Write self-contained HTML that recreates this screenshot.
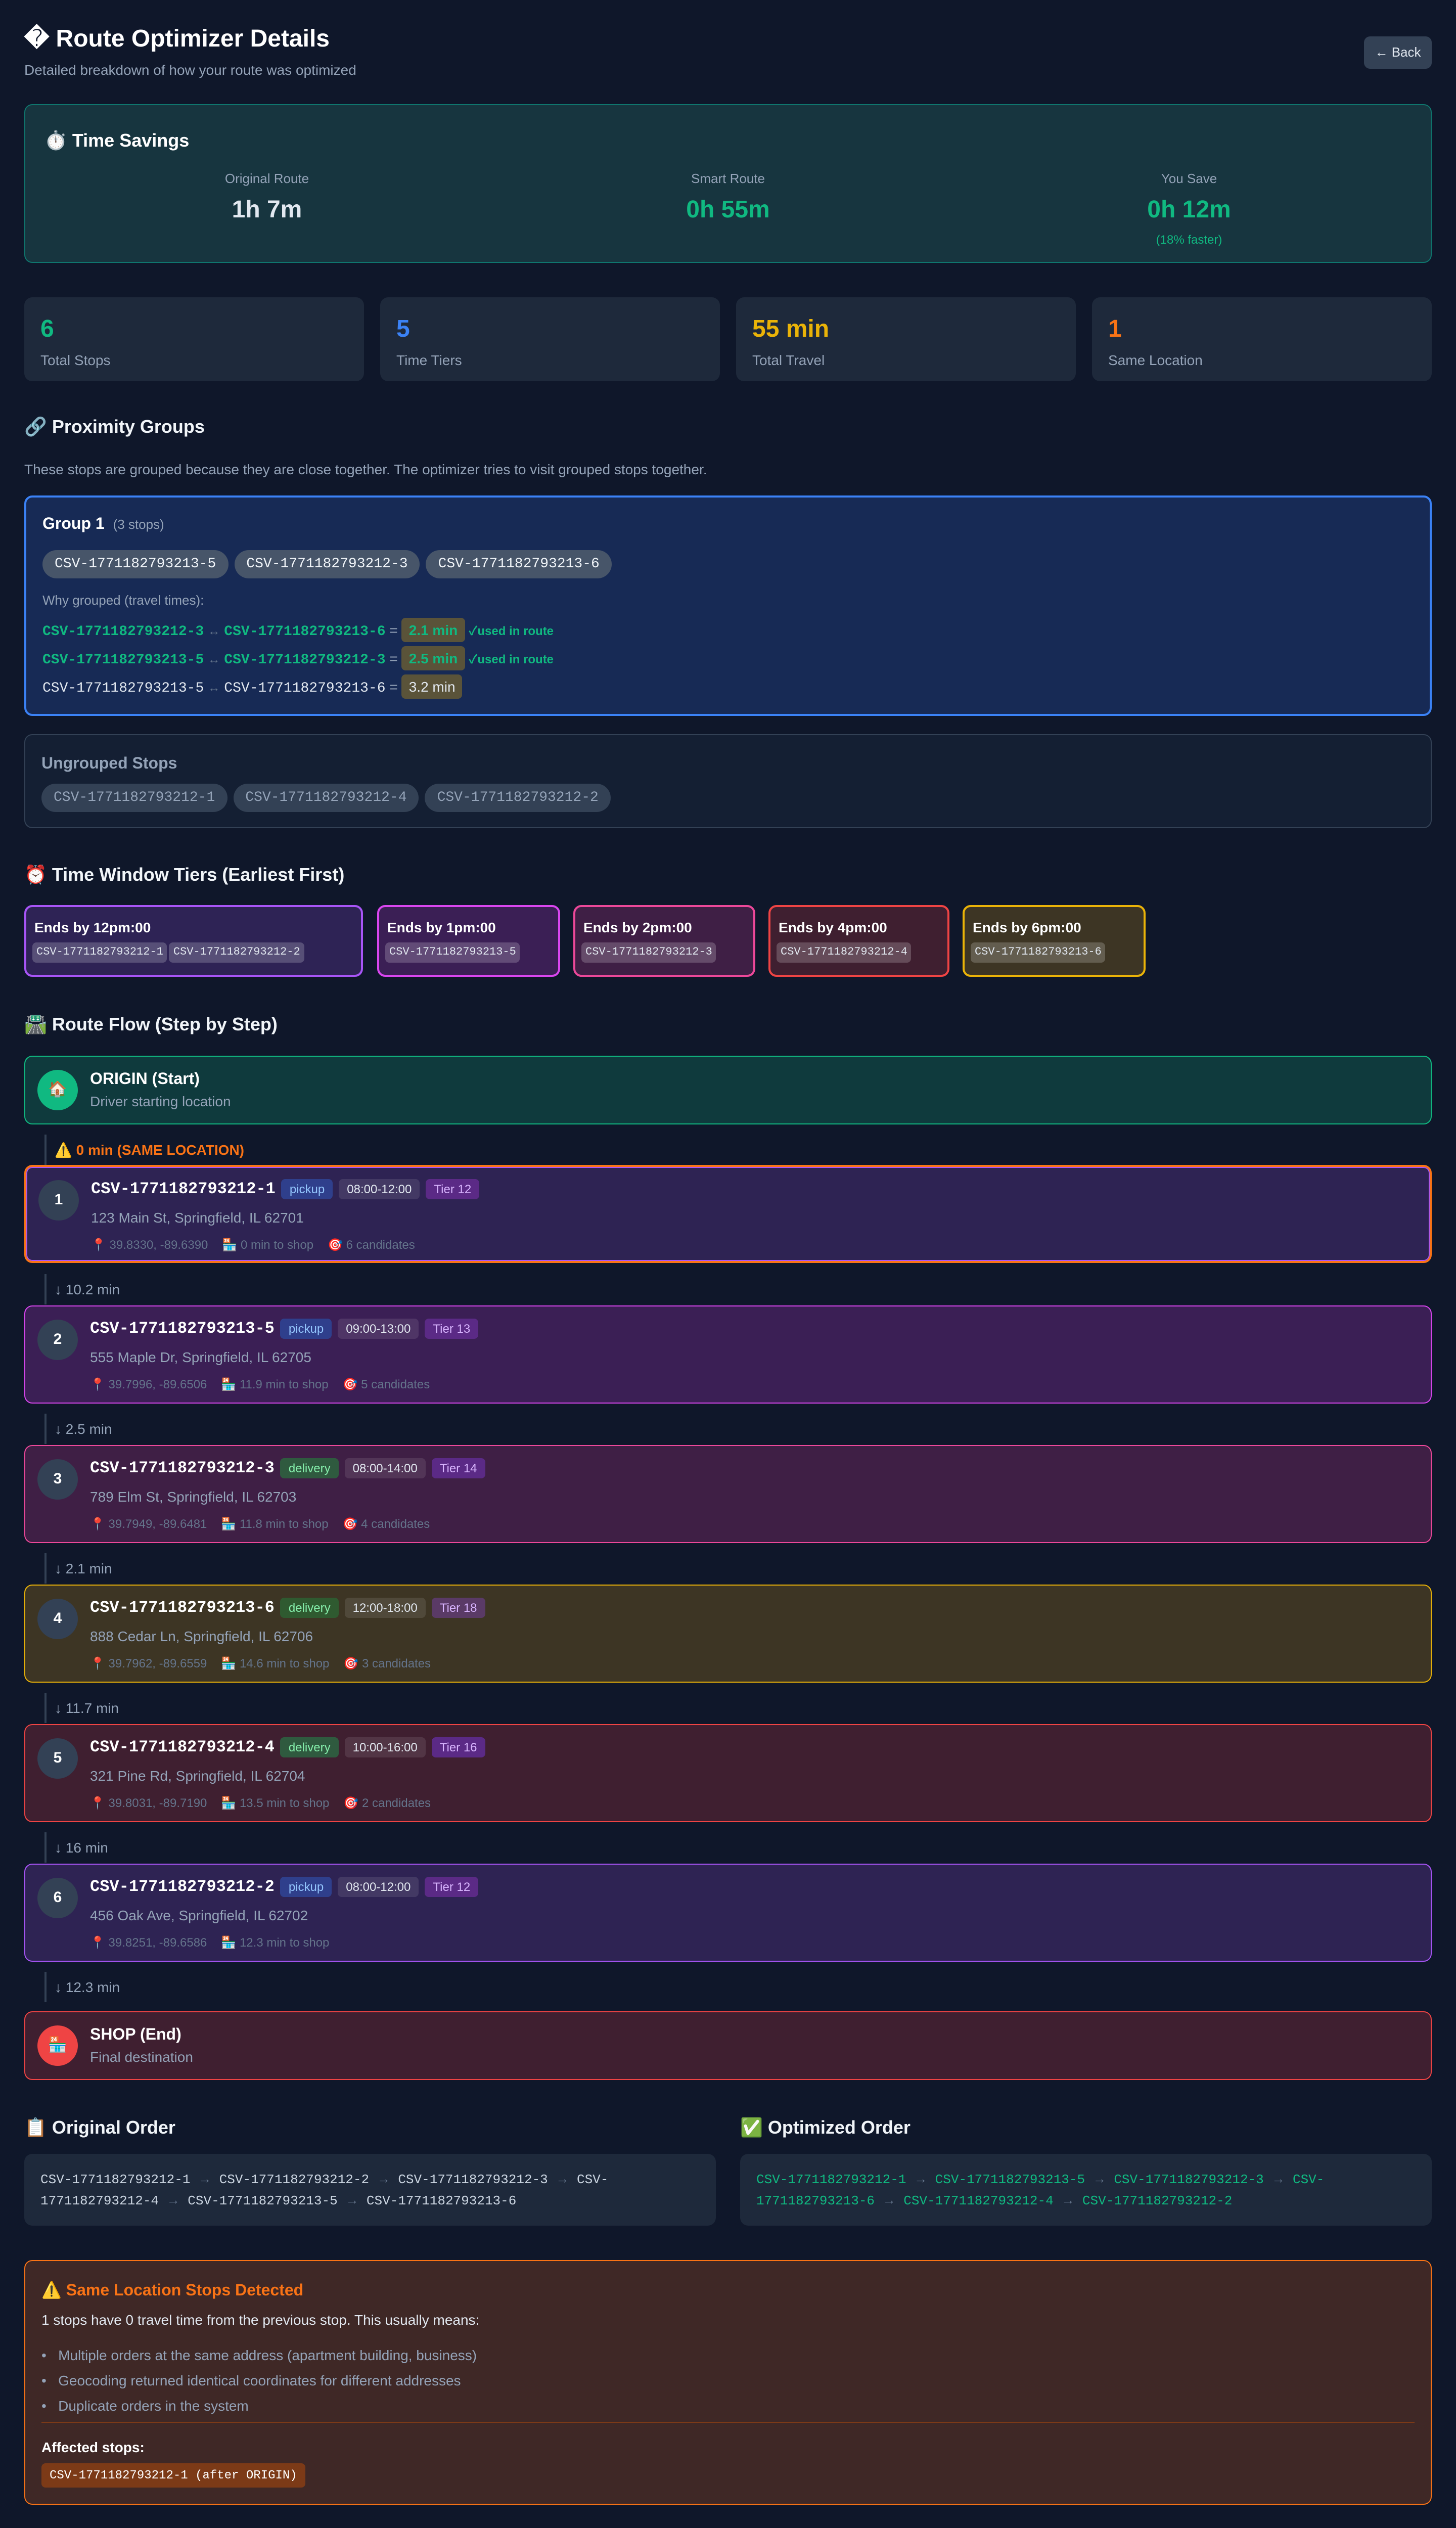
<!DOCTYPE html>
<html><head><meta charset="utf-8">
<style>
*{box-sizing:border-box;margin:0;padding:0}
html,body{width:2880px;height:5070px;overflow:hidden;background:#0f172a}
#w{width:1440px;height:2535px;transform:scale(2);transform-origin:0 0;background:#0f172a;color:#e2e8f0;font-family:"Liberation Sans","Noto Sans CJK SC",sans-serif;position:relative;overflow:hidden}
.a{position:absolute}
.mono{font-family:"Liberation Mono",monospace}
h2{font-size:18px;font-weight:bold;color:#f1f5f9;position:absolute;left:24px}
.box{position:absolute;left:24px;width:1392px;border-radius:8px}
.col{position:absolute;text-align:center;width:448px}
.lbl{font-size:13px;color:#94a3b8}
.val{font-size:24px;font-weight:bold;margin-top:10px}
.stat{position:absolute;top:294px;height:83px;width:336px;background:#1e293b;border-radius:8px;padding:18px 16px}
.stat .n{font-size:24px;font-weight:bold;line-height:28px}
.stat .l{font-size:14px;color:#94a3b8;margin-top:8px}
.chip{display:inline-block;font-family:"Liberation Mono",monospace;font-size:14px;padding:0 12px;height:28px;line-height:28px;border-radius:14px;background:#475569;color:#f1f5f9;margin-right:6px}
.row{position:absolute;left:18px;font-size:14px;height:26px;line-height:26px;white-space:nowrap}
.row .m{font-family:"Liberation Mono",monospace}
.g{color:#10b981;font-weight:bold}
.tm{display:inline-block;background:#5a5339;border-radius:4px;padding:0 7px;height:24px;line-height:24px;margin-left:4px}
.ar{color:#64748b;font-size:12px;margin:0 4px}
.tier{position:absolute;top:895px;height:71px;border:2px solid;border-radius:8px;padding:12px 6px}
.tier b{display:block;font-size:14px;color:#fff;margin-bottom:6px;padding-left:2px}
.tier span{display:inline-block;font-family:"Liberation Mono",monospace;font-size:11px;background:rgba(255,255,255,.2);color:#e2e8f0;padding:0 4px;height:20px;line-height:20px;border-radius:4px;margin-right:2px}
.stop{position:absolute;left:24px;width:1392px;height:97px;border:2px solid;border-radius:8px}
.circ{position:absolute;left:12px;width:40px;height:40px;border-radius:50%;background:#334155;color:#fff;font-weight:bold;font-size:15px;text-align:center;line-height:40px}
.st{position:absolute;left:64px;top:12px;white-space:nowrap}
.st .id{font-family:"Liberation Mono",monospace;font-weight:bold;font-size:16px;color:#fff;vertical-align:middle}
.bd{display:inline-block;font-size:12px;height:20px;line-height:20px;padding:0 8px;border-radius:4px;margin-left:6px;vertical-align:middle}
.pk{background:#2f3f8c;color:#93c5fd}.dl{background:#2f5a3f;color:#86efac}.tw{background:rgba(255,255,255,.1);color:#e2e8f0}.tr{background:#5b2a86;color:#d8b4fe}
.addr{position:absolute;left:64px;top:42px;font-size:14px;color:#94a3b8}
.meta{position:absolute;left:64px;top:70px;font-size:12px;color:#64748b;white-space:nowrap}
.meta i{font-style:normal;margin-right:14px}
.conn{position:absolute;left:44px;height:30px;border-left:2px solid #334155;padding-left:8px;font-size:14px;color:#94a3b8;line-height:30px}
.ord{position:absolute;top:2130px;height:71px;width:684px;background:#1e293b;border-radius:8px;padding:15px 16px;font-family:"Liberation Mono",monospace;font-size:13px;line-height:20px}
.ord i{font-style:normal;color:#64748b;font-family:"Liberation Sans",sans-serif}
</style></head><body><div id="w">

<div class="a" style="left:24px;top:24px;font-size:24px;font-weight:bold;color:#fff">&#xFFFD; Route Optimizer Details</div>
<div class="a" style="left:24px;top:61px;font-size:14px;color:#94a3b8">Detailed breakdown of how your route was optimized</div>
<div class="a" style="left:1349px;top:36px;width:67px;height:32px;background:#334155;border-radius:6px;font-size:13px;color:#e2e8f0;text-align:center;line-height:32px">← Back</div>

<div class="box" style="top:103px;height:157px;background:#17353f;border:1px solid #0f766e">
  <div class="a" style="left:19px;top:25px;font-size:18px;font-weight:bold;color:#fff">⏱️ Time Savings</div>
  <div class="col" style="left:15px;top:65px"><div class="lbl">Original Route</div><div class="val" style="color:#e2e8f0">1h 7m</div></div>
  <div class="col" style="left:471px;top:65px"><div class="lbl">Smart Route</div><div class="val" style="color:#10b981">0h 55m</div></div>
  <div class="col" style="left:927px;top:65px"><div class="lbl">You Save</div><div class="val" style="color:#10b981">0h 12m</div><div style="font-size:12px;color:#10b981;margin-top:8px">(18% faster)</div></div>
</div>

<div class="stat" style="left:24px"><div class="n" style="color:#10b981">6</div><div class="l">Total Stops</div></div>
<div class="stat" style="left:376px"><div class="n" style="color:#3b82f6">5</div><div class="l">Time Tiers</div></div>
<div class="stat" style="left:728px"><div class="n" style="color:#eab308">55 min</div><div class="l">Total Travel</div></div>
<div class="stat" style="left:1080px"><div class="n" style="color:#f97316">1</div><div class="l">Same Location</div></div>

<h2 style="top:412px">🔗 Proximity Groups</h2>
<div class="a" style="left:24px;top:456px;font-size:14px;color:#94a3b8">These stops are grouped because they are close together. The optimizer tries to visit grouped stops together.</div>

<div class="box" style="top:490px;height:218px;background:#172a55;border:2px solid #3b82f6">
  <div class="a" style="left:16px;top:18px;font-size:16px;font-weight:bold;color:#fff">Group 1 <span style="font-size:13px;font-weight:normal;color:#94a3b8;margin-left:4px">(3 stops)</span></div>
  <div class="a" style="left:16px;top:52px;white-space:nowrap"><span class="chip">CSV-1771182793213-5</span><span class="chip">CSV-1771182793212-3</span><span class="chip">CSV-1771182793213-6</span></div>
  <div class="a" style="left:16px;top:94px;font-size:13px;color:#94a3b8">Why grouped (travel times):</div>
  <div class="row" style="left:16px;top:118px"><span class="m g">CSV-1771182793212-3</span><span class="ar">↔</span><span class="m g">CSV-1771182793213-6</span> <span style="color:#94a3b8">=</span><span class="tm g">2.1 min</span> <span class="g" style="font-size:12px">✓used in route</span></div>
  <div class="row" style="left:16px;top:146px"><span class="m g">CSV-1771182793213-5</span><span class="ar">↔</span><span class="m g">CSV-1771182793212-3</span> <span style="color:#94a3b8">=</span><span class="tm g">2.5 min</span> <span class="g" style="font-size:12px">✓used in route</span></div>
  <div class="row" style="left:16px;top:174px"><span class="m">CSV-1771182793213-5</span><span class="ar">↔</span><span class="m">CSV-1771182793213-6</span> <span style="color:#94a3b8">=</span><span class="tm">3.2 min</span></div>
</div>

<div class="box" style="top:726px;height:93px;background:#141f33;border:1px solid #334155">
  <div class="a" style="left:16px;top:20px;font-size:16px;font-weight:bold;color:#94a3b8">Ungrouped Stops</div>
  <div class="a" style="left:16px;top:48px;white-space:nowrap"><span class="chip" style="background:#334155;color:#94a3b8">CSV-1771182793212-1</span><span class="chip" style="background:#334155;color:#94a3b8">CSV-1771182793212-4</span><span class="chip" style="background:#334155;color:#94a3b8">CSV-1771182793212-2</span></div>
</div>

<h2 style="top:855px">⏰ Time Window Tiers (Earliest First)</h2>
<div class="tier" style="left:24px;width:335px;border-color:#a855f7;background:#2e2355"><b>Ends by 12pm:00</b><span>CSV-1771182793212-1</span><span>CSV-1771182793212-2</span></div>
<div class="tier" style="left:373px;width:181px;border-color:#d946ef;background:#3b1f55"><b>Ends by 1pm:00</b><span>CSV-1771182793213-5</span></div>
<div class="tier" style="left:567px;width:180px;border-color:#ec4899;background:#3f1f45"><b>Ends by 2pm:00</b><span>CSV-1771182793212-3</span></div>
<div class="tier" style="left:760px;width:179px;border-color:#ef4444;background:#3f1f30"><b>Ends by 4pm:00</b><span>CSV-1771182793212-4</span></div>
<div class="tier" style="left:952px;width:181px;border-color:#eab308;background:#3d3524"><b>Ends by 6pm:00</b><span>CSV-1771182793213-6</span></div>

<h2 style="top:1003px">🛣️ Route Flow (Step by Step)</h2>

<div class="stop" style="top:1044px;height:68px;border-color:#10b981;background:#0f3a3d;border-width:1px">
  <div class="circ" style="top:13px;background:#10b981">🏠</div>
  <div class="a" style="left:64px;top:14px;font-size:16px;font-weight:bold;color:#fff">ORIGIN (Start)</div>
  <div class="a" style="left:64px;top:36px;font-size:14px;color:#94a3b8">Driver starting location</div>
</div>
<div class="conn" style="top:1122px;color:#f97316;font-weight:bold">⚠️ 0 min (SAME LOCATION)</div>

<div class="stop" style="top:1152px;border-color:#f97316;background:#2e2353;box-shadow:inset 0 0 0 1px #a855f7">
  <div class="circ" style="top:13px">1</div>
  <div class="st"><span class="id">CSV-1771182793212-1</span><span class="bd pk">pickup</span><span class="bd tw">08:00-12:00</span><span class="bd tr">Tier 12</span></div>
  <div class="addr">123 Main St, Springfield, IL 62701</div>
  <div class="meta"><i>📍 39.8330, -89.6390</i><i>🏪 0 min to shop</i><i>🎯 6 candidates</i></div>
</div>
<div class="conn" style="top:1260px">↓ 10.2 min</div>

<div class="stop" style="top:1291px;border-color:#d946ef;background:#3b1f55;border-width:1px">
  <div class="circ" style="top:13px">2</div>
  <div class="st"><span class="id">CSV-1771182793213-5</span><span class="bd pk">pickup</span><span class="bd tw">09:00-13:00</span><span class="bd tr">Tier 13</span></div>
  <div class="addr">555 Maple Dr, Springfield, IL 62705</div>
  <div class="meta"><i>📍 39.7996, -89.6506</i><i>🏪 11.9 min to shop</i><i>🎯 5 candidates</i></div>
</div>
<div class="conn" style="top:1398px">↓ 2.5 min</div>

<div class="stop" style="top:1429px;border-color:#ec4899;background:#3f1f45;border-width:1px">
  <div class="circ" style="top:13px">3</div>
  <div class="st"><span class="id">CSV-1771182793212-3</span><span class="bd dl">delivery</span><span class="bd tw">08:00-14:00</span><span class="bd tr">Tier 14</span></div>
  <div class="addr">789 Elm St, Springfield, IL 62703</div>
  <div class="meta"><i>📍 39.7949, -89.6481</i><i>🏪 11.8 min to shop</i><i>🎯 4 candidates</i></div>
</div>
<div class="conn" style="top:1536px">↓ 2.1 min</div>

<div class="stop" style="top:1567px;border-color:#eab308;background:#3d3524;border-width:1px">
  <div class="circ" style="top:13px">4</div>
  <div class="st"><span class="id">CSV-1771182793213-6</span><span class="bd dl" style="background:#2f5a30">delivery</span><span class="bd tw">12:00-18:00</span><span class="bd tr" style="background:#5a3a66">Tier 18</span></div>
  <div class="addr">888 Cedar Ln, Springfield, IL 62706</div>
  <div class="meta"><i>📍 39.7962, -89.6559</i><i>🏪 14.6 min to shop</i><i>🎯 3 candidates</i></div>
</div>
<div class="conn" style="top:1674px">↓ 11.7 min</div>

<div class="stop" style="top:1705px;border-color:#ef4444;background:#3f1f30;border-width:1px">
  <div class="circ" style="top:13px">5</div>
  <div class="st"><span class="id">CSV-1771182793212-4</span><span class="bd dl">delivery</span><span class="bd tw">10:00-16:00</span><span class="bd tr">Tier 16</span></div>
  <div class="addr">321 Pine Rd, Springfield, IL 62704</div>
  <div class="meta"><i>📍 39.8031, -89.7190</i><i>🏪 13.5 min to shop</i><i>🎯 2 candidates</i></div>
</div>
<div class="conn" style="top:1812px">↓ 16 min</div>

<div class="stop" style="top:1843px;border-color:#a855f7;background:#2e2353;border-width:1px">
  <div class="circ" style="top:13px">6</div>
  <div class="st"><span class="id">CSV-1771182793212-2</span><span class="bd pk">pickup</span><span class="bd tw">08:00-12:00</span><span class="bd tr">Tier 12</span></div>
  <div class="addr">456 Oak Ave, Springfield, IL 62702</div>
  <div class="meta"><i>📍 39.8251, -89.6586</i><i>🏪 12.3 min to shop</i></div>
</div>
<div class="conn" style="top:1950px">↓ 12.3 min</div>

<div class="stop" style="top:1989px;height:68px;border-color:#ef4444;background:#3f1f30;border-width:1px">
  <div class="circ" style="top:13px;background:#ef4444">🏪</div>
  <div class="a" style="left:64px;top:14px;font-size:16px;font-weight:bold;color:#fff">SHOP (End)</div>
  <div class="a" style="left:64px;top:36px;font-size:14px;color:#94a3b8">Final destination</div>
</div>

<h2 style="top:2094px">📋 Original Order</h2>
<h2 style="top:2094px;left:732px">✅ Optimized Order</h2>
<div class="ord" style="left:24px;color:#cbd5e1">CSV-1771182793212-1 <i>→</i> CSV-1771182793212-2 <i>→</i> CSV-1771182793212-3 <i>→</i> CSV-1771182793212-4 <i>→</i> CSV-1771182793213-5 <i>→</i> CSV-1771182793213-6</div>
<div class="ord" style="left:732px;color:#10b981">CSV-1771182793212-1 <i>→</i> CSV-1771182793213-5 <i>→</i> CSV-1771182793212-3 <i>→</i> CSV-1771182793213-6 <i>→</i> CSV-1771182793212-4 <i>→</i> CSV-1771182793212-2</div>

<div class="box" style="top:2235px;height:242px;background:#3f2826;border:1px solid #f97316">
  <div class="a" style="left:16px;top:19px;font-size:16px;font-weight:bold;color:#f97316">⚠️ Same Location Stops Detected</div>
  <div class="a" style="left:16px;top:50px;font-size:14px;color:#e2e8f0">1 stops have 0 travel time from the previous stop. This usually means:</div>
  <div class="a" style="left:16px;top:81px;font-size:14px;color:#94a3b8;line-height:25px">
    <div>•&nbsp;&nbsp;&nbsp;Multiple orders at the same address (apartment building, business)</div>
    <div>•&nbsp;&nbsp;&nbsp;Geocoding returned identical coordinates for different addresses</div>
    <div>•&nbsp;&nbsp;&nbsp;Duplicate orders in the system</div>
  </div>
  <div class="a" style="left:16px;right:16px;top:159px;border-top:1px solid #7c3a17"></div>
  <div class="a" style="left:16px;top:176px;font-size:14px;font-weight:bold;color:#fff">Affected stops:</div>
  <div class="a mono" style="left:16px;top:200px;height:24px;line-height:24px;padding:0 8px;background:#7c3a17;border-radius:4px;font-size:12px;color:#fff">CSV-1771182793212-1 (after ORIGIN)</div>
</div>

</div></body></html>
